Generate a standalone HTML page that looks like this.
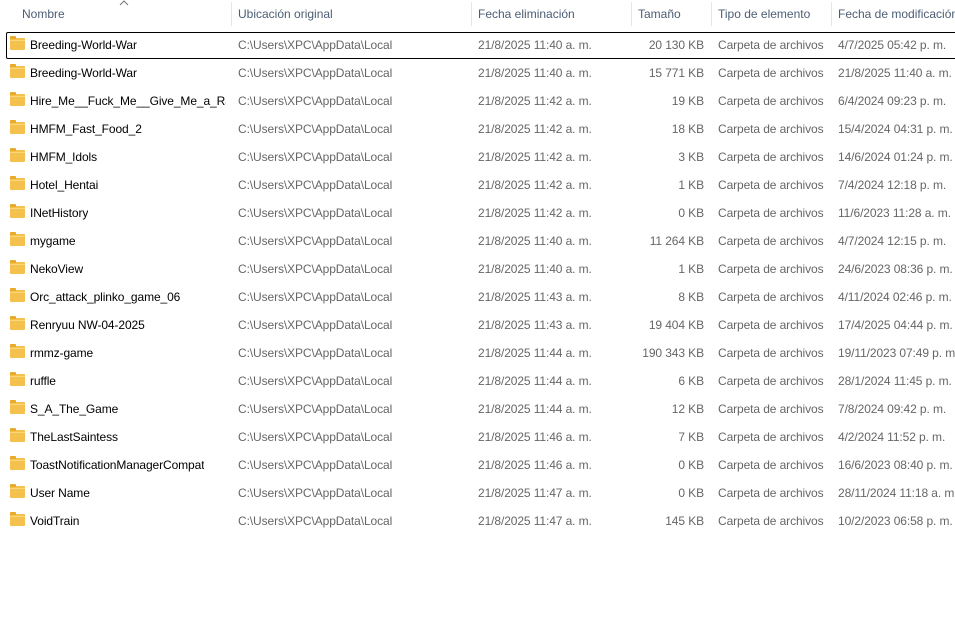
<!DOCTYPE html>
<html><head><style>
body{margin:0;width:955px;height:634px;background:#fff;font-family:"Liberation Sans",sans-serif;font-size:12px;overflow:hidden;position:relative}
.hdr{position:absolute;top:0;left:0;width:955px;height:28px;color:#4c5d74}
.hdr span{position:absolute;top:7px;white-space:nowrap}
.sep{position:absolute;top:2px;width:1px;height:24px;background:#e5e5e5}
.row{position:absolute;left:0;width:955px;height:28px;color:#666;letter-spacing:-0.1px}
.row span{position:absolute;top:7px;white-space:nowrap}
.n{left:30px;color:#000;max-width:196px;overflow:hidden}
.l{left:238px}.d{left:478px}.s{right:251px;text-align:right}.t{left:718px}.m{left:838px}
.f{position:absolute;left:10px;top:7px;width:15px;height:12px;background:#f4c04e;border-radius:1px}
.f:before{content:"";position:absolute;left:0;top:-2px;width:6px;height:3px;background:#e9a92b;border-radius:1px 1px 0 0}
.f:after{content:"";position:absolute;left:0;top:2px;width:15px;height:1px;background:#fbd77a}
.focus{position:absolute;left:6px;top:32px;width:955px;height:25px;border:1px solid #000;border-radius:2px}
</style></head><body>
<div class="hdr">
<svg style="position:absolute;left:119px;top:0" width="10" height="6"><path d="M1 5 L5 1 L9 5" fill="none" stroke="#777" stroke-width="1"/></svg>
<span style="left:22px">Nombre</span><div class="sep" style="left:231px"></div>
<span style="left:238px">Ubicación original</span><div class="sep" style="left:471px"></div>
<span style="left:478px">Fecha eliminación</span><div class="sep" style="left:631px"></div>
<span style="left:638px">Tamaño</span><div class="sep" style="left:711px"></div>
<span style="left:718px">Tipo de elemento</span><div class="sep" style="left:831px"></div>
<span style="left:838px">Fecha de modificación</span>
</div>
<div class="focus"></div>
<div id="rows"></div>
<script>
var d=[["Breeding-World-War","21/8/2025 11:40 a. m.","20 130 KB","4/7/2025 05:42 p. m."],
["Breeding-World-War","21/8/2025 11:40 a. m.","15 771 KB","21/8/2025 11:40 a. m."],
["Hire_Me__Fuck_Me__Give_Me_a_Ra...","21/8/2025 11:42 a. m.","19 KB","6/4/2024 09:23 p. m."],
["HMFM_Fast_Food_2","21/8/2025 11:42 a. m.","18 KB","15/4/2024 04:31 p. m."],
["HMFM_Idols","21/8/2025 11:42 a. m.","3 KB","14/6/2024 01:24 p. m."],
["Hotel_Hentai","21/8/2025 11:42 a. m.","1 KB","7/4/2024 12:18 p. m."],
["INetHistory","21/8/2025 11:42 a. m.","0 KB","11/6/2023 11:28 a. m."],
["mygame","21/8/2025 11:40 a. m.","11 264 KB","4/7/2024 12:15 p. m."],
["NekoView","21/8/2025 11:40 a. m.","1 KB","24/6/2023 08:36 p. m."],
["Orc_attack_plinko_game_06","21/8/2025 11:43 a. m.","8 KB","4/11/2024 02:46 p. m."],
["Renryuu NW-04-2025","21/8/2025 11:43 a. m.","19 404 KB","17/4/2025 04:44 p. m."],
["rmmz-game","21/8/2025 11:44 a. m.","190 343 KB","19/11/2023 07:49 p. m."],
["ruffle","21/8/2025 11:44 a. m.","6 KB","28/1/2024 11:45 p. m."],
["S_A_The_Game","21/8/2025 11:44 a. m.","12 KB","7/8/2024 09:42 p. m."],
["TheLastSaintess","21/8/2025 11:46 a. m.","7 KB","4/2/2024 11:52 p. m."],
["ToastNotificationManagerCompat","21/8/2025 11:46 a. m.","0 KB","16/6/2023 08:40 p. m."],
["User Name","21/8/2025 11:47 a. m.","0 KB","28/11/2024 11:18 a. m."],
["VoidTrain","21/8/2025 11:47 a. m.","145 KB","10/2/2023 06:58 p. m."]];
var h="";d.forEach(function(r,i){h+='<div class="row" style="top:'+(31+i*28)+'px"><div class="f"></div><span class="n">'+r[0]+'</span><span class="l">C:\\Users\\XPC\\AppData\\Local</span><span class="d">'+r[1]+'</span><span class="s">'+r[2]+'</span><span class="t">Carpeta de archivos</span><span class="m">'+r[3]+'</span></div>';});
document.getElementById("rows").innerHTML=h;
</script>
</body></html>
